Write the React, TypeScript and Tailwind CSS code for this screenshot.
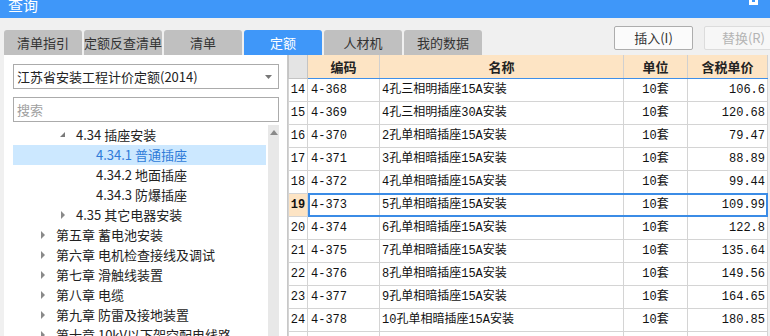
import React from "react";

const ui = { fontFamily: '"Noto Sans CJK SC", "Noto Sans", sans-serif' };
const mono = { fontFamily: '"Liberation Mono", "Noto Sans CJK SC", monospace' };

const tabs = ["清单指引", "定额反查清单", "清单", "定额", "人材机", "我的数据"];

const tree = [
	{ level: 2, text: "4.34 插座安装", arrow: "open" },
	{ level: 3, text: "4.34.1 普通插座", active: true },
	{ level: 3, text: "4.34.2 地面插座" },
	{ level: 3, text: "4.34.3 防爆插座" },
	{ level: 2, text: "4.35 其它电器安装", arrow: "closed" },
	{ level: 1, text: "第五章 蓄电池安装", arrow: "closed" },
	{ level: 1, text: "第六章 电机检查接线及调试", arrow: "closed" },
	{ level: 1, text: "第七章 滑触线装置", arrow: "closed" },
	{ level: 1, text: "第八章 电缆", arrow: "closed" },
	{ level: 1, text: "第九章 防雷及接地装置", arrow: "closed" },
	{ level: 1, text: "第十章 10kV以下架空配电线路", arrow: "closed" },
];

const rows = [
	[14, "4-368", "4孔三相明插座15A安装", "106.6"],
	[15, "4-369", "4孔三相明插座30A安装", "120.68"],
	[16, "4-370", "2孔单相暗插座15A安装", "79.47"],
	[17, "4-371", "3孔单相暗插座15A安装", "88.89"],
	[18, "4-372", "4孔单相暗插座15A安装", "99.44"],
	[19, "4-373", "5孔单相暗插座15A安装", "109.99"],
	[20, "4-374", "6孔单相暗插座15A安装", "122.8"],
	[21, "4-375", "7孔单相暗插座15A安装", "135.64"],
	[22, "4-376", "8孔单相暗插座15A安装", "149.56"],
	[23, "4-377", "9孔单相暗插座15A安装", "164.65"],
	[24, "4-378", "10孔单相暗插座15A安装", "180.85"],
];

function Arrow({ kind }: { kind?: string }) {
	if (kind === "open")
		return (
			<svg width="6" height="6" viewBox="0 0 6 6" className="mr-[10px]">
				<polygon points="5,0 5,5 0,5" fill="#7a7a7a" />
			</svg>
		);
	if (kind === "closed")
		return (
			<svg width="6" height="8" viewBox="0 0 6 8" className="mr-[10px]">
				<polygon points="1,0 5,4 1,8" fill="#8a8a8a" />
			</svg>
		);
	return <span className="w-[6px] mr-[10px]" />;
}

export default function App() {
	return (
		<div className="w-[770px] h-[336px] overflow-hidden bg-[#f0f0f0] flex flex-col" style={ui}>
			{/* title bar */}
			<div className="h-[18px] shrink-0 bg-[#3f97f9] overflow-hidden flex justify-between">
				<div className="-mt-[9px] h-[26px] flex items-center pl-[8px] text-[15px] text-white leading-none">查询</div>
				<div className="-mt-[4px] mr-[12px] w-[9px] h-[9px] border-[3px] border-white bg-[#3f97f9]" />
			</div>

			{/* tabs + buttons */}
			<div className="h-[37px] shrink-0 flex items-end">
				<div className="flex gap-[2px] pl-[4px] shrink-0">
					{tabs.map((t) => (
						<div
							key={t}
							className={
								t === "定额"
									? "w-[78px] h-[25px] rounded-t-[3px] bg-[#3f97f9] text-white text-[13px] flex items-center justify-center"
									: "w-[78px] h-[25px] rounded-t-[3px] bg-[#c0c0c0] text-[#333] text-[13px] flex items-center justify-center"
							}
						>
							{t}
						</div>
					))}
				</div>
				<div className="flex gap-[11px] ml-[132px] mb-[5px] shrink-0">
					<div className="w-[79px] h-[24px] shrink-0 rounded-[2px] border border-[#adadad] bg-[#fbfbfb] text-[13px] text-[#333] flex items-center justify-center">
						插入(I)
					</div>
					<div className="w-[79px] h-[24px] shrink-0 rounded-[2px] border border-[#dcdcdc] bg-[#f7f7f7] text-[13px] text-[#b4b4b4] flex items-center justify-center">
						替换(R)
					</div>
				</div>
			</div>

			{/* body */}
			<div className="flex flex-1 min-h-0">
				{/* left panel */}
				<div className="ml-[4px] w-[284px] shrink-0 bg-white border-r border-[#c8c8c8] flex flex-col pl-[9px] pr-[8px] pt-[9px]">
					<div className="h-[25px] border border-[#ababab] flex items-center justify-between pl-[3px] pr-[6px] text-[13px] text-[#222]">
						<span>江苏省安装工程计价定额(2014)</span>
						<svg width="7" height="4" viewBox="0 0 7 4">
							<polygon points="0,0 7,0 3.5,4" fill="#777" />
						</svg>
					</div>
					<div className="mt-[8px] h-[25px] border border-[#ababab] flex items-center pl-[3px] text-[13px] text-[#a0a0a0]">
						搜索
					</div>
					<div className="mt-[3px] flex flex-1 min-h-0">
						<div className="flex-1 flex flex-col">
							{tree.map((n) => (
								<div
									key={n.text}
									className={
										n.active
											? "h-[20px] shrink-0 flex items-center bg-[#cce8ff] text-[#2f7bd8] text-[13px] mr-[2px]"
											: "h-[20px] shrink-0 flex items-center text-[#222] text-[13px]"
									}
									style={{ paddingLeft: n.level === 1 ? 27 : n.level === 2 ? 47 : 67 }}
								>
									<Arrow kind={n.arrow} />
									<span className="whitespace-nowrap">{n.text}</span>
								</div>
							))}
						</div>
						<div className="w-[11px] bg-[#e8e8e8] flex justify-center pt-[5px]">
							<svg width="8" height="5" viewBox="0 0 8 5">
								<polygon points="0,5 8,5 4,0" fill="#8a8a8a" />
							</svg>
						</div>
					</div>
				</div>

				{/* grid */}
				<div className="w-[480px] shrink-0 bg-white flex flex-col text-[12px] text-[#111]">
					<div className="h-[24px] shrink-0 flex">
						<div className="w-[20px] bg-[#e4e4e4] border-l border-r border-b border-[#c4c4c4]" />
						<div className="flex flex-1 bg-[#fde4c4] border-b border-[#3f8fe8] font-bold text-[13px] text-[#222]">
							<div className="w-[72px] border-r border-[#d0d0d0] flex items-center justify-center">编码</div>
							<div className="w-[244px] border-r border-[#d0d0d0] flex items-center justify-center">名称</div>
							<div className="w-[64px] border-r border-[#d0d0d0] flex items-center justify-center">单位</div>
							<div className="w-[80px] border-r border-[#d0d0d0] flex items-center justify-center">含税单价</div>
						</div>
					</div>
					{rows.map(([n, code, name, price]) => {
						const sel = n === 19;
						return (
							<div key={n} className="h-[23px] shrink-0 flex relative">
								<div
									className={
										sel
											? "w-[20px] bg-[#fde4c4] border-l border-r border-b border-[#d4d4d4] flex items-center justify-center font-bold"
											: "w-[20px] border-l border-r border-b border-[#d4d4d4] flex items-center justify-center"
									}
									style={mono}
								>
									{n}
								</div>
								<div className="w-[72px] border-r border-b border-[#d4d4d4] flex items-center pl-[3px]" style={mono}>
									{code}
								</div>
								<div className="w-[244px] border-r border-b border-[#d4d4d4] flex items-center pl-[2px] whitespace-nowrap" style={mono}>
									{name}
								</div>
								<div className="w-[64px] border-r border-b border-[#d4d4d4] flex items-center justify-center" style={mono}>
									10套
								</div>
								<div className="w-[80px] border-r border-b border-[#d4d4d4] flex items-center justify-end pr-[2px]" style={mono}>
									{price}
								</div>
								{sel && <div className="absolute left-[20px] right-0 -top-[1px] bottom-0 border-2 border-[#3b8ce6]" />}
							</div>
						);
					})}
					{/* next row, only its top shows */}
					<div className="h-[23px] shrink-0 flex">
						<div className="w-[20px] border-l border-r border-[#d4d4d4]" />
						<div className="w-[72px] border-r border-[#d4d4d4]" />
						<div className="w-[244px] border-r border-[#d4d4d4]" />
						<div className="w-[64px] border-r border-[#d4d4d4]" />
						<div className="w-[80px] border-r border-[#d4d4d4]" />
					</div>
				</div>
			</div>
		</div>
	);
}
